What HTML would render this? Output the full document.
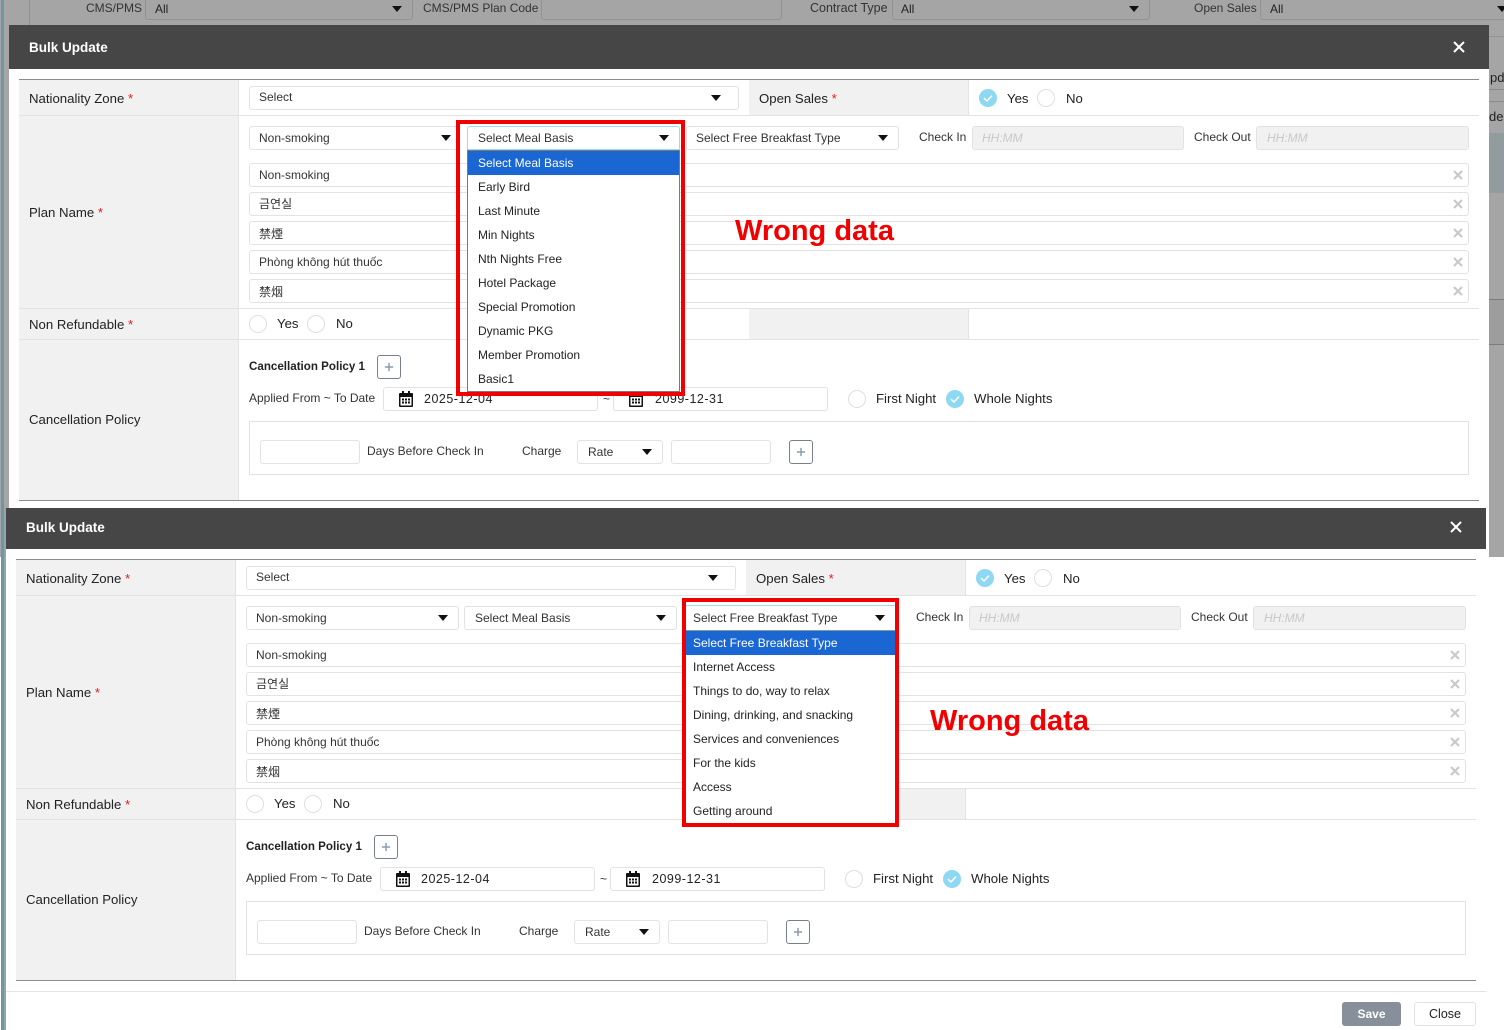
<!DOCTYPE html>
<html><head><meta charset="utf-8"><title>Bulk Update</title>
<style>
html,body{margin:0;padding:0}
body{width:1504px;height:1030px;position:relative;overflow:hidden;background:#fff;font-family:"Liberation Sans","Noto Sans CJK KR",sans-serif;font-size:13.2px;color:#222}
.a{position:absolute;box-sizing:border-box}
.t{position:absolute;white-space:nowrap;line-height:16px;height:16px}
.s{font-size:12px;color:#333}
.b{position:absolute;box-sizing:border-box;background:#fff;border:1px solid #e2e2e2;border-radius:3px}
.g{background:#f1f1f1}
.ar{position:absolute;width:0;height:0;border-left:5.5px solid transparent;border-right:5.5px solid transparent;border-top:6px solid #111}
.r{position:absolute;box-sizing:border-box;width:18px;height:18px;border:1px solid #dfdfdf;border-radius:50%;background:#fff}
.ck{position:absolute;width:18px;height:18px}
.st{color:#f01818}
.x{position:absolute;width:10px;height:10px}
.pl{position:absolute;box-sizing:border-box;width:24px;height:24px;border:1px solid #76808c;border-radius:3px;background:#fff}
.cal{position:absolute;width:14px;height:16px}
.li{position:absolute;left:0;right:0;height:24px;line-height:24px;white-space:nowrap;font-size:12px;color:#222}
.wd{position:absolute;white-space:nowrap;color:#f00000;font-weight:bold;font-size:29px;line-height:36px;height:36px;font-family:"Liberation Sans",sans-serif}
.d{letter-spacing:.5px;font-size:12.5px;color:#222}
.h{font-style:italic;color:#c8c8c8;font-size:12px}
.cp{font-size:11.6px;color:#222;font-weight:bold}
</style></head>
<body>
<svg width="0" height="0" style="position:absolute">
<symbol id="cal" viewBox="0 0 14 16"><path d="M3 0h2v2h4V0h2v2h2a1 1 0 0 1 1 1v12a1 1 0 0 1-1 1H1a1 1 0 0 1-1-1V3a1 1 0 0 1 1-1h2z" fill="#111"/><rect x="1.5" y="6" width="11" height="8.5" fill="#fff"/><path d="M3 7.5h2v2H3zM6 7.5h2v2H6zM9 7.5h2v2H9zM3 10.5h2v2H3zM6 10.5h2v2H6zM9 10.5h2v2H9z" fill="#111"/></symbol>
<symbol id="ck" viewBox="0 0 18 18"><circle cx="9" cy="9" r="9" fill="#8fd8f3"/><path d="M5 9.2l3 2.8 5-5.4" fill="none" stroke="#fff" stroke-width="1.5"/></symbol>
<symbol id="xx" viewBox="0 0 10 10"><path d="M1 1l8 8M9 1l-8 8" stroke="#c9c9c9" stroke-width="2.2" fill="none"/></symbol>
<symbol id="xw" viewBox="0 0 12 12"><path d="M1 1l10 10M11 1L1 11" stroke="#fff" stroke-width="2" fill="none"/></symbol>
<symbol id="pp" viewBox="0 0 24 24"><path d="M12 7.5v9M7.5 12h9" stroke="#8a9bb0" stroke-width="1.6" fill="none"/></symbol>
</svg>

<!-- backdrop -->
<div class="a" style="left:0;top:0;width:1504px;height:557px;background:#a5a5a5"></div>
<div class="a" style="left:1px;top:0;width:3px;height:1030px;background:#6a98a6"></div>
<div class="a" style="left:4px;top:508px;width:2px;height:522px;background:#9ca2a5"></div>
<div class="a" style="left:29px;top:0;width:1px;height:25px;background:#8f8f8f"></div>
<div class="t" style="left:86px;top:0;color:#333;font-size:12px">CMS/PMS</div>
<div class="a" style="left:145px;top:-3px;width:268px;height:23px;border:1px solid #929292;border-radius:3px"></div>
<div class="t" style="left:155px;top:1px;font-size:12px;color:#222">All</div>
<div class="ar" style="left:392px;top:6px;border-top-color:#111"></div>
<div class="t" style="left:423px;top:0;color:#333;font-size:12px">CMS/PMS Plan Code</div>
<div class="a" style="left:541px;top:-3px;width:241px;height:23px;border:1px solid #929292;border-radius:3px"></div>
<div class="t" style="left:810px;top:0;color:#333;font-size:12.5px">Contract Type</div>
<div class="a" style="left:892px;top:-3px;width:258px;height:23px;border:1px solid #929292;border-radius:3px"></div>
<div class="t" style="left:901px;top:1px;font-size:12px;color:#222">All</div>
<div class="ar" style="left:1129px;top:6px"></div>
<div class="t" style="left:1194px;top:0;color:#333;font-size:12px">Open Sales</div>
<div class="a" style="left:1260px;top:-3px;width:250px;height:23px;border:1px solid #929292;border-radius:3px"></div>
<div class="t" style="left:1270px;top:1px;font-size:12px;color:#222">All</div>
<div class="ar" style="left:1497px;top:6px"></div>
<div class="a" style="left:1489px;top:36px;width:15px;height:1px;background:#949494"></div>
<div class="a" style="left:1489px;top:89px;width:15px;height:1px;background:#8a8a8a"></div>
<div class="a" style="left:1489px;top:101px;width:15px;height:1px;background:#8a8a8a"></div>
<div class="t" style="left:1490px;top:70px;font-size:13px;color:#222">pd</div>
<div class="t" style="left:1489px;top:109px;font-size:13px;color:#222">de</div>
<div class="a" style="left:1489px;top:133px;width:15px;height:60px;background:#929c9f"></div>
<div class="a" style="left:1489px;top:299px;width:15px;height:46px;background:#9d9d9d;border-top:1px solid #7c7c7c;border-bottom:1px solid #7c7c7c"></div>

<!-- MODAL 1 -->
<div class="a" style="left:9px;top:25px;width:1480px;height:483px;background:#fff"></div>
<div class="a" style="left:9px;top:25px;width:1480px;height:44px;background:#464646"></div>
<div class="t" style="left:29px;top:40px;color:#fff;font-weight:bold;font-size:13.5px">Bulk Update</div>
<svg class="a" style="left:1453px;top:41px" width="12" height="12"><use href="#xw"/></svg>

<div class="a" id="b1" style="left:0;top:0;width:1504px;height:510px">
<div class="a g" style="left:19px;top:80px;width:220px;height:420px;border-right:1px solid #e3e3e3"></div>
<div class="a g" style="left:749px;top:80px;width:220px;height:35px;border-right:1px solid #e3e3e3"></div>
<div class="a g" style="left:749px;top:309px;width:220px;height:30px;border-right:1px solid #e3e3e3"></div>
<div class="a" style="left:19px;top:79px;width:1460px;height:1px;background:#8c8c8c"></div>
<div class="a" style="left:19px;top:115px;width:1460px;height:1px;background:#e3e3e3"></div>
<div class="a" style="left:19px;top:308px;width:1460px;height:1px;background:#e3e3e3"></div>
<div class="a" style="left:19px;top:339px;width:1460px;height:1px;background:#e3e3e3"></div>
<div class="a" style="left:19px;top:500px;width:1460px;height:1px;background:#8c8c8c"></div>
<div class="t" style="left:29px;top:91px">Nationality Zone <span class="st">*</span></div>
<div class="t" style="left:29px;top:205px">Plan Name <span class="st">*</span></div>
<div class="t" style="left:29px;top:317px">Non Refundable <span class="st">*</span></div>
<div class="t" style="left:29px;top:412px">Cancellation Policy</div>
<div class="t" style="left:759px;top:91px">Open Sales <span class="st">*</span></div>

<div class="b" style="left:249px;top:86px;width:490px;height:24px"></div>
<div class="t s" style="left:259px;top:89px">Select</div><div class="ar" style="left:711px;top:95px"></div>
<svg class="ck" style="left:979px;top:89px"><use href="#ck"/></svg>
<div class="t" style="left:1007px;top:91px">Yes</div>
<div class="r" style="left:1037px;top:89px"></div>
<div class="t" style="left:1066px;top:91px">No</div>

<div class="b" style="left:249px;top:126px;width:209px;height:24px"></div>
<div class="t s" style="left:259px;top:130px">Non-smoking</div><div class="ar" style="left:441px;top:135px"></div>
<div class="b" style="left:467px;top:126px;width:212px;height:24px"></div>
<div class="t s" style="left:478px;top:130px">Select Meal Basis</div><div class="ar" style="left:659px;top:135px"></div>
<div class="b" style="left:686px;top:126px;width:213px;height:24px"></div>
<div class="t s" style="left:696px;top:130px">Select Free Breakfast Type</div><div class="ar" style="left:878px;top:135px"></div>
<div class="t s" style="left:919px;top:129px">Check In</div>
<div class="b g" style="left:972px;top:126px;width:212px;height:24px"></div>
<div class="t h" style="left:982px;top:130px">HH:MM</div>
<div class="t s" style="left:1194px;top:129px">Check Out</div>
<div class="b g" style="left:1256px;top:126px;width:213px;height:24px"></div>
<div class="t h" style="left:1267px;top:130px">HH:MM</div>

<div class="b" style="left:249px;top:163px;width:1220px;height:24px"></div><div class="t s" style="left:259px;top:167px">Non-smoking</div><svg class="x" style="left:1453px;top:170px"><use href="#xx"/></svg>
<div class="b" style="left:249px;top:192px;width:1220px;height:24px"></div><div class="t s" style="left:259px;top:196px">금연실</div><svg class="x" style="left:1453px;top:199px"><use href="#xx"/></svg>
<div class="b" style="left:249px;top:221px;width:1220px;height:24px"></div><div class="t s" style="left:259px;top:226px">禁煙</div><svg class="x" style="left:1453px;top:228px"><use href="#xx"/></svg>
<div class="b" style="left:249px;top:250px;width:1220px;height:24px"></div><div class="t s" style="left:259px;top:254px">Phòng không hút thuốc</div><svg class="x" style="left:1453px;top:257px"><use href="#xx"/></svg>
<div class="b" style="left:249px;top:279px;width:1220px;height:24px"></div><div class="t s" style="left:259px;top:284px">禁烟</div><svg class="x" style="left:1453px;top:286px"><use href="#xx"/></svg>

<div class="r" style="left:249px;top:315px"></div><div class="t" style="left:277px;top:316px">Yes</div>
<div class="r" style="left:307px;top:315px"></div><div class="t" style="left:336px;top:316px">No</div>

<div class="t cp" style="left:249px;top:359px">Cancellation Policy 1</div>
<svg class="pl" style="left:377px;top:355px" viewBox="0 0 24 24"><use href="#pp"/></svg>
<div class="t s" style="left:249px;top:390px">Applied From ~ To Date</div>
<div class="b" style="left:383px;top:387px;width:215px;height:24px"></div>
<svg class="cal" style="left:399px;top:391px"><use href="#cal"/></svg>
<div class="t d" style="left:424px;top:391px">2025-12-04</div>
<div class="t s" style="left:603px;top:391px">~</div>
<div class="b" style="left:613px;top:387px;width:215px;height:24px"></div>
<svg class="cal" style="left:629px;top:391px"><use href="#cal"/></svg>
<div class="t d" style="left:655px;top:391px">2099-12-31</div>
<div class="r" style="left:848px;top:390px"></div><div class="t" style="left:876px;top:391px">First Night</div>
<svg class="ck" style="left:946px;top:390px"><use href="#ck"/></svg><div class="t" style="left:974px;top:391px">Whole Nights</div>

<div class="a" style="left:249px;top:421px;width:1220px;height:54px;border:1px solid #e2e2e2"></div>
<div class="b" style="left:260px;top:440px;width:100px;height:24px"></div>
<div class="t s" style="left:367px;top:443px">Days Before Check In</div>
<div class="t s" style="left:522px;top:443px">Charge</div>
<div class="b" style="left:577px;top:440px;width:86px;height:24px"></div>
<div class="t" style="left:588px;top:444px;font-size:12px;color:#333">Rate</div><div class="ar" style="left:642px;top:449px"></div>
<div class="b" style="left:671px;top:440px;width:100px;height:24px"></div>
<svg class="pl" style="left:789px;top:440px" viewBox="0 0 24 24"><use href="#pp"/></svg>
</div>

<!-- Dropdown 1 -->
<div class="a" style="left:456px;top:120px;width:229px;height:276px;border:4px solid #f00000"></div>
<div class="a" style="left:467px;top:126px;width:213px;height:24px;background:#fff;border:1px solid #9bdcf0;border-radius:3px 3px 0 0"></div>
<div class="t s" style="left:478px;top:130px">Select Meal Basis</div><div class="ar" style="left:659px;top:135px"></div>
<div class="a" style="left:467px;top:150px;width:213px;height:242px;background:#fff;border:1px solid #7a7a7a">
<div class="li" style="top:0;background:#1a66d2;color:#fff;padding-left:10px">Select Meal Basis</div>
<div class="li" style="top:24px;padding-left:10px">Early Bird</div>
<div class="li" style="top:48px;padding-left:10px">Last Minute</div>
<div class="li" style="top:72px;padding-left:10px">Min Nights</div>
<div class="li" style="top:96px;padding-left:10px">Nth Nights Free</div>
<div class="li" style="top:120px;padding-left:10px">Hotel Package</div>
<div class="li" style="top:144px;padding-left:10px">Special Promotion</div>
<div class="li" style="top:168px;padding-left:10px">Dynamic PKG</div>
<div class="li" style="top:192px;padding-left:10px">Member Promotion</div>
<div class="li" style="top:216px;padding-left:10px">Basic1</div>
</div>
<div class="wd" style="left:735px;top:213px">Wrong data</div>

<!-- MODAL 2 -->
<div class="a" style="left:6px;top:508px;width:1483px;height:49px;background:#fff"></div>
<div class="a" style="left:6px;top:557px;width:1498px;height:473px;background:#fff"></div>
<div class="a" style="left:6px;top:508px;width:1480px;height:41px;background:#464646"></div>
<div class="t" style="left:26px;top:520px;color:#fff;font-weight:bold;font-size:13.5px">Bulk Update</div>
<svg class="a" style="left:1450px;top:521px" width="12" height="12"><use href="#xw"/></svg>

<div class="a" style="left:-3px;top:480px;width:1504px;height:510px">
<div class="a g" style="left:19px;top:80px;width:220px;height:420px;border-right:1px solid #e3e3e3"></div>
<div class="a g" style="left:749px;top:80px;width:220px;height:35px;border-right:1px solid #e3e3e3"></div>
<div class="a g" style="left:749px;top:309px;width:220px;height:30px;border-right:1px solid #e3e3e3"></div>
<div class="a" style="left:19px;top:79px;width:1460px;height:1px;background:#8c8c8c"></div>
<div class="a" style="left:19px;top:115px;width:1460px;height:1px;background:#e3e3e3"></div>
<div class="a" style="left:19px;top:308px;width:1460px;height:1px;background:#e3e3e3"></div>
<div class="a" style="left:19px;top:339px;width:1460px;height:1px;background:#e3e3e3"></div>
<div class="a" style="left:19px;top:500px;width:1460px;height:1px;background:#8c8c8c"></div>
<div class="t" style="left:29px;top:91px">Nationality Zone <span class="st">*</span></div>
<div class="t" style="left:29px;top:205px">Plan Name <span class="st">*</span></div>
<div class="t" style="left:29px;top:317px">Non Refundable <span class="st">*</span></div>
<div class="t" style="left:29px;top:412px">Cancellation Policy</div>
<div class="t" style="left:759px;top:91px">Open Sales <span class="st">*</span></div>

<div class="b" style="left:249px;top:86px;width:490px;height:24px"></div>
<div class="t s" style="left:259px;top:89px">Select</div><div class="ar" style="left:711px;top:95px"></div>
<svg class="ck" style="left:979px;top:89px"><use href="#ck"/></svg>
<div class="t" style="left:1007px;top:91px">Yes</div>
<div class="r" style="left:1037px;top:89px"></div>
<div class="t" style="left:1066px;top:91px">No</div>

<div class="b" style="left:249px;top:126px;width:213px;height:24px"></div>
<div class="t s" style="left:259px;top:130px">Non-smoking</div><div class="ar" style="left:441px;top:135px"></div>
<div class="b" style="left:467px;top:126px;width:213px;height:24px"></div>
<div class="t s" style="left:478px;top:130px">Select Meal Basis</div><div class="ar" style="left:659px;top:135px"></div>
<div class="t s" style="left:919px;top:129px">Check In</div>
<div class="b g" style="left:972px;top:126px;width:212px;height:24px"></div>
<div class="t h" style="left:982px;top:130px">HH:MM</div>
<div class="t s" style="left:1194px;top:129px">Check Out</div>
<div class="b g" style="left:1256px;top:126px;width:213px;height:24px"></div>
<div class="t h" style="left:1267px;top:130px">HH:MM</div>

<div class="b" style="left:249px;top:163px;width:1220px;height:24px"></div><div class="t s" style="left:259px;top:167px">Non-smoking</div><svg class="x" style="left:1453px;top:170px"><use href="#xx"/></svg>
<div class="b" style="left:249px;top:192px;width:1220px;height:24px"></div><div class="t s" style="left:259px;top:196px">금연실</div><svg class="x" style="left:1453px;top:199px"><use href="#xx"/></svg>
<div class="b" style="left:249px;top:221px;width:1220px;height:24px"></div><div class="t s" style="left:259px;top:226px">禁煙</div><svg class="x" style="left:1453px;top:228px"><use href="#xx"/></svg>
<div class="b" style="left:249px;top:250px;width:1220px;height:24px"></div><div class="t s" style="left:259px;top:254px">Phòng không hút thuốc</div><svg class="x" style="left:1453px;top:257px"><use href="#xx"/></svg>
<div class="b" style="left:249px;top:279px;width:1220px;height:24px"></div><div class="t s" style="left:259px;top:284px">禁烟</div><svg class="x" style="left:1453px;top:286px"><use href="#xx"/></svg>

<div class="r" style="left:249px;top:315px"></div><div class="t" style="left:277px;top:316px">Yes</div>
<div class="r" style="left:307px;top:315px"></div><div class="t" style="left:336px;top:316px">No</div>

<div class="t cp" style="left:249px;top:359px">Cancellation Policy 1</div>
<svg class="pl" style="left:377px;top:355px" viewBox="0 0 24 24"><use href="#pp"/></svg>
<div class="t s" style="left:249px;top:390px">Applied From ~ To Date</div>
<div class="b" style="left:383px;top:387px;width:215px;height:24px"></div>
<svg class="cal" style="left:399px;top:391px"><use href="#cal"/></svg>
<div class="t d" style="left:424px;top:391px">2025-12-04</div>
<div class="t s" style="left:603px;top:391px">~</div>
<div class="b" style="left:613px;top:387px;width:215px;height:24px"></div>
<svg class="cal" style="left:629px;top:391px"><use href="#cal"/></svg>
<div class="t d" style="left:655px;top:391px">2099-12-31</div>
<div class="r" style="left:848px;top:390px"></div><div class="t" style="left:876px;top:391px">First Night</div>
<svg class="ck" style="left:946px;top:390px"><use href="#ck"/></svg><div class="t" style="left:974px;top:391px">Whole Nights</div>

<div class="a" style="left:249px;top:421px;width:1220px;height:54px;border:1px solid #e2e2e2"></div>
<div class="b" style="left:260px;top:440px;width:100px;height:24px"></div>
<div class="t s" style="left:367px;top:443px">Days Before Check In</div>
<div class="t s" style="left:522px;top:443px">Charge</div>
<div class="b" style="left:577px;top:440px;width:86px;height:24px"></div>
<div class="t" style="left:588px;top:444px;font-size:12px;color:#333">Rate</div><div class="ar" style="left:642px;top:449px"></div>
<div class="b" style="left:671px;top:440px;width:100px;height:24px"></div>
<svg class="pl" style="left:789px;top:440px" viewBox="0 0 24 24"><use href="#pp"/></svg>
</div>

<!-- Dropdown 2 -->
<div class="a" style="left:682px;top:598px;width:217px;height:229px;border:4px solid #f00000;background:#fff"></div>
<div class="a" style="left:686px;top:605px;width:209px;height:1px;background:#9bdcf0"></div>
<div class="t s" style="left:693px;top:610px">Select Free Breakfast Type</div><div class="ar" style="left:875px;top:615px"></div>
<div class="a" style="left:686px;top:630px;width:209px;height:1px;background:#7f9a9f"></div>
<div class="a" style="left:686px;top:631px;width:209px;height:192px;background:#fff">
<div class="li" style="top:0;background:#1a66d2;color:#fff;padding-left:7px">Select Free Breakfast Type</div>
<div class="li" style="top:24px;padding-left:7px">Internet Access</div>
<div class="li" style="top:48px;padding-left:7px">Things to do, way to relax</div>
<div class="li" style="top:72px;padding-left:7px">Dining, drinking, and snacking</div>
<div class="li" style="top:96px;padding-left:7px">Services and conveniences</div>
<div class="li" style="top:120px;padding-left:7px">For the kids</div>
<div class="li" style="top:144px;padding-left:7px">Access</div>
<div class="li" style="top:168px;padding-left:7px">Getting around</div>
</div>
<div class="wd" style="left:930px;top:703px">Wrong data</div>

<!-- footer -->
<div class="a" style="left:6px;top:991px;width:1480px;height:1px;background:#e3e3e3"></div>
<div class="a" style="left:1342px;top:1002px;width:59px;height:24px;background:#87909a;border-radius:3px;color:#fff;font-size:12px;font-weight:bold;line-height:24px;text-align:center">Save</div>
<div class="a" style="left:1414px;top:1002px;width:62px;height:24px;background:#fff;border:1px solid #e2e2e2;border-radius:3px;color:#222;font-size:12.5px;line-height:22px;text-align:center">Close</div>
</body></html>
